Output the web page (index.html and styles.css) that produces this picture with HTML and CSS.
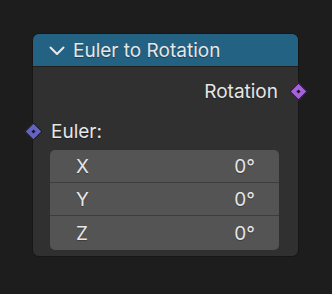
FILE: index.html
```html
<!DOCTYPE html>
<html>
<head>
<meta charset="utf-8">
<link rel="stylesheet" href="styles.css">
</head>
<body>
<div class="node">
  <div class="header">
    <svg class="chev" width="16" height="10" viewBox="0 0 16 10"><path d="M1.5 1.5 L8 8 L14.5 1.5" fill="none" stroke="#e8e8e8" stroke-width="2" stroke-linecap="round" stroke-linejoin="round"/></svg>
    <span class="title">Euler to Rotation</span>
  </div>
  <div class="content">
    <div class="row out">
      <span class="label">Rotation</span>
      <span class="socket rot"></span>
    </div>
    <div class="row in">
      <span class="socket vec"></span>
      <span class="label">Euler:</span>
    </div>
    <div class="fields">
      <div class="field"><span>X</span><span>0°</span></div>
      <div class="field"><span>Y</span><span>0°</span></div>
      <div class="field"><span>Z</span><span>0°</span></div>
    </div>
  </div>
</div>
</body>
</html>
```
FILE: styles.css
```css
html, body {
  margin: 0;
  padding: 0;
  background: #1d1d1d;
  width: 332px;
  height: 294px;
  overflow: hidden;
}
body {
  padding: 33px 0 0 32px;
  box-sizing: border-box;
  font-family: Inter, "DejaVu Sans", sans-serif;
  color: #e6e6e6;
}
.node {
  width: 265px;
  border: 1px solid #161616;
  border-radius: 7px;
  background: #303030;
  box-sizing: content-box;
}
.header {
  height: 32px;
  background: #246283;
  border-radius: 6px 6px 0 0;
  border-bottom: 1px solid #1f1f1f;
  display: flex;
  align-items: center;
  padding-left: 16px;
  gap: 8px;
}
.chev { display: block; margin-top: 1px; }
.title {
  font-size: 19px;
  line-height: 1;
  text-shadow: 0 1px 1px rgba(0,0,0,0.35);
}
.content {
  padding: 8px 0 6px 0;
}
.row {
  height: 32px;
  display: flex;
  align-items: center;
  position: relative;
  font-size: 19px;
  text-shadow: 0 1px 1px rgba(0,0,0,0.35);
}
.row.out { justify-content: flex-end; padding-right: 20px; }
.row.in { padding-left: 18px; margin-top: 8px; margin-bottom: 3px; }
.socket {
  position: absolute;
  top: 10px;
  width: 11px;
  height: 11px;
  transform: rotate(45deg);
  border: 1px solid #141414;
  box-sizing: content-box;
}
.socket::after {
  content: "";
  position: absolute;
  left: 4px; top: 4px;
  width: 3px; height: 3px;
  background: #1a1a1a;
}
.socket.rot { background: #a463d6; right: -6.5px; }
.socket.vec { background: #6363c7; left: -6.5px; }
.fields {
  margin: 0 19px 0 17px;
  background: #545454;
  border-radius: 5px;
  overflow: hidden;
}
.field {
  height: 32px;
  display: flex;
  align-items: center;
  justify-content: space-between;
  padding: 0 24px 0 26px;
  font-size: 19px;
  border-top: 1px solid #3d3d3d;
  text-shadow: 0 1px 1px rgba(0,0,0,0.3);
}
.field:first-child { border-top: none; }
.field:last-child { height: 34px; }
```
